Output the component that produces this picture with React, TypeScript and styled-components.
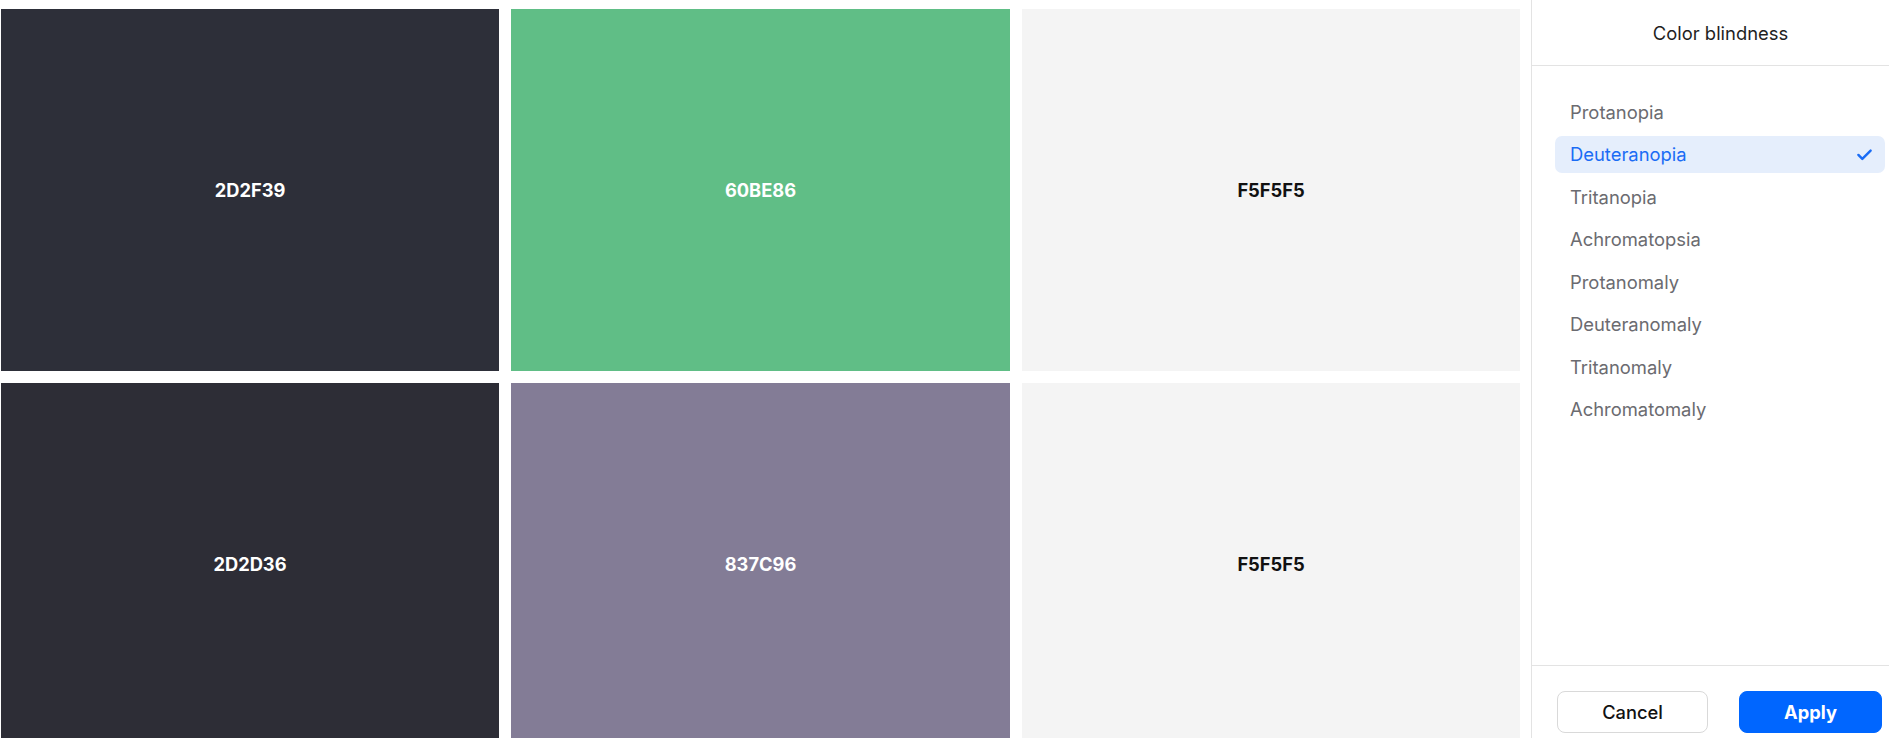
import React from "react";
import styled, { createGlobalStyle } from "styled-components";

const Global = createGlobalStyle`
  html, body { margin: 0; padding: 0; background: #ffffff; overflow: hidden; }
  body { font-family: Inter, "Noto Sans", "Liberation Sans", sans-serif; }
`;

const Page = styled.div`
  display: flex;
  width: 1889px;
  height: 738px;
  overflow: hidden;
`;

const Main = styled.main`
  flex: 0 0 1531px;
  box-sizing: border-box;
  padding: 9px 11px 0 1px;
  display: grid;
  grid-template-columns: 498px 499px 498px;
  grid-auto-rows: 362px;
  column-gap: 12px;
  row-gap: 12px;
`;

const Swatch = styled.div<{ $bg: string; $fg: string }>`
  background: ${(p) => p.$bg};
  color: ${(p) => p.$fg};
  display: flex;
  align-items: center;
  justify-content: center;
  font-weight: 700;
  font-size: 18.3px;
`;

const Panel = styled.aside`
  flex: 0 0 378px;
  box-sizing: border-box;
  border-left: 1px solid #e3e3e3;
  display: flex;
  flex-direction: column;
  height: 738px;
`;

const Header = styled.header`
  height: 66px;
  border-bottom: 1px solid #e3e3e3;
  display: flex;
  align-items: center;
  justify-content: center;
  font-size: 18.4px;
  color: #1f1f1f;
  padding-top: 1px;
  box-sizing: border-box;
`;

const List = styled.ul`
  list-style: none;
  margin: 0;
  flex: 1;
  padding: 27px 24px 0 23px;
  display: flex;
  flex-direction: column;
  gap: 5.5px;
`;

const Item = styled.li<{ $active?: boolean }>`
  height: 37px;
  border-radius: 7px;
  padding: 0 15px;
  display: flex;
  align-items: center;
  justify-content: space-between;
  font-size: 18.4px;
  color: ${(p) => (p.$active ? "#1a6cf5" : "#6b6b70")};
  background: ${(p) => (p.$active ? "#e5eefc" : "transparent")};
`;

const Check = styled.svg`
  width: 21px;
  height: 21px;
  margin-right: -5px;
`;

const Footer = styled.footer`
  height: 73px;
  border-top: 1px solid #e3e3e3;
  box-sizing: border-box;
  display: flex;
  align-items: flex-start;
  justify-content: space-between;
  padding: 25px 27px 0 25px;
`;

const Button = styled.button<{ $primary?: boolean }>`
  height: 42px;
  width: ${(p) => (p.$primary ? "143px" : "151px")};
  border-radius: 8px;
  font-family: inherit;
  font-size: 18.3px;
  font-weight: ${(p) => (p.$primary ? 700 : 500)};
  color: ${(p) => (p.$primary ? "#ffffff" : "#111111")};
  background: ${(p) => (p.$primary ? "#0066ff" : "#ffffff")};
  border: 1px solid ${(p) => (p.$primary ? "#0066ff" : "#d9d9d9")};
  cursor: pointer;
`;

const swatches = [
  { bg: "#2D2F39", fg: "#ffffff", label: "2D2F39" },
  { bg: "#60BE86", fg: "#ffffff", label: "60BE86" },
  { bg: "#F4F4F4", fg: "#111111", label: "F5F5F5" },
  { bg: "#2D2D36", fg: "#ffffff", label: "2D2D36" },
  { bg: "#837C96", fg: "#ffffff", label: "837C96" },
  { bg: "#F4F4F4", fg: "#111111", label: "F5F5F5" },
];

const options = [
  "Protanopia",
  "Deuteranopia",
  "Tritanopia",
  "Achromatopsia",
  "Protanomaly",
  "Deuteranomaly",
  "Tritanomaly",
  "Achromatomaly",
];

export default function App() {
  return (
    <>
      <Global />
      <Page>
        <Main>
          {swatches.map((s, i) => (
            <Swatch key={i} $bg={s.bg} $fg={s.fg}>
              {s.label}
            </Swatch>
          ))}
        </Main>
        <Panel>
          <Header>Color blindness</Header>
          <List>
            {options.map((o) => (
              <Item key={o} $active={o === "Deuteranopia"}>
                {o}
                {o === "Deuteranopia" && (
                  <Check viewBox="0 0 24 24" fill="none" stroke="#1a6cf5" strokeWidth="2.8" strokeLinecap="round" strokeLinejoin="round">
                    <path d="M5 12.5l4.5 4.5L19 7.5" />
                  </Check>
                )}
              </Item>
            ))}
          </List>
          <Footer>
            <Button>Cancel</Button>
            <Button $primary>Apply</Button>
          </Footer>
        </Panel>
      </Page>
    </>
  );
}
